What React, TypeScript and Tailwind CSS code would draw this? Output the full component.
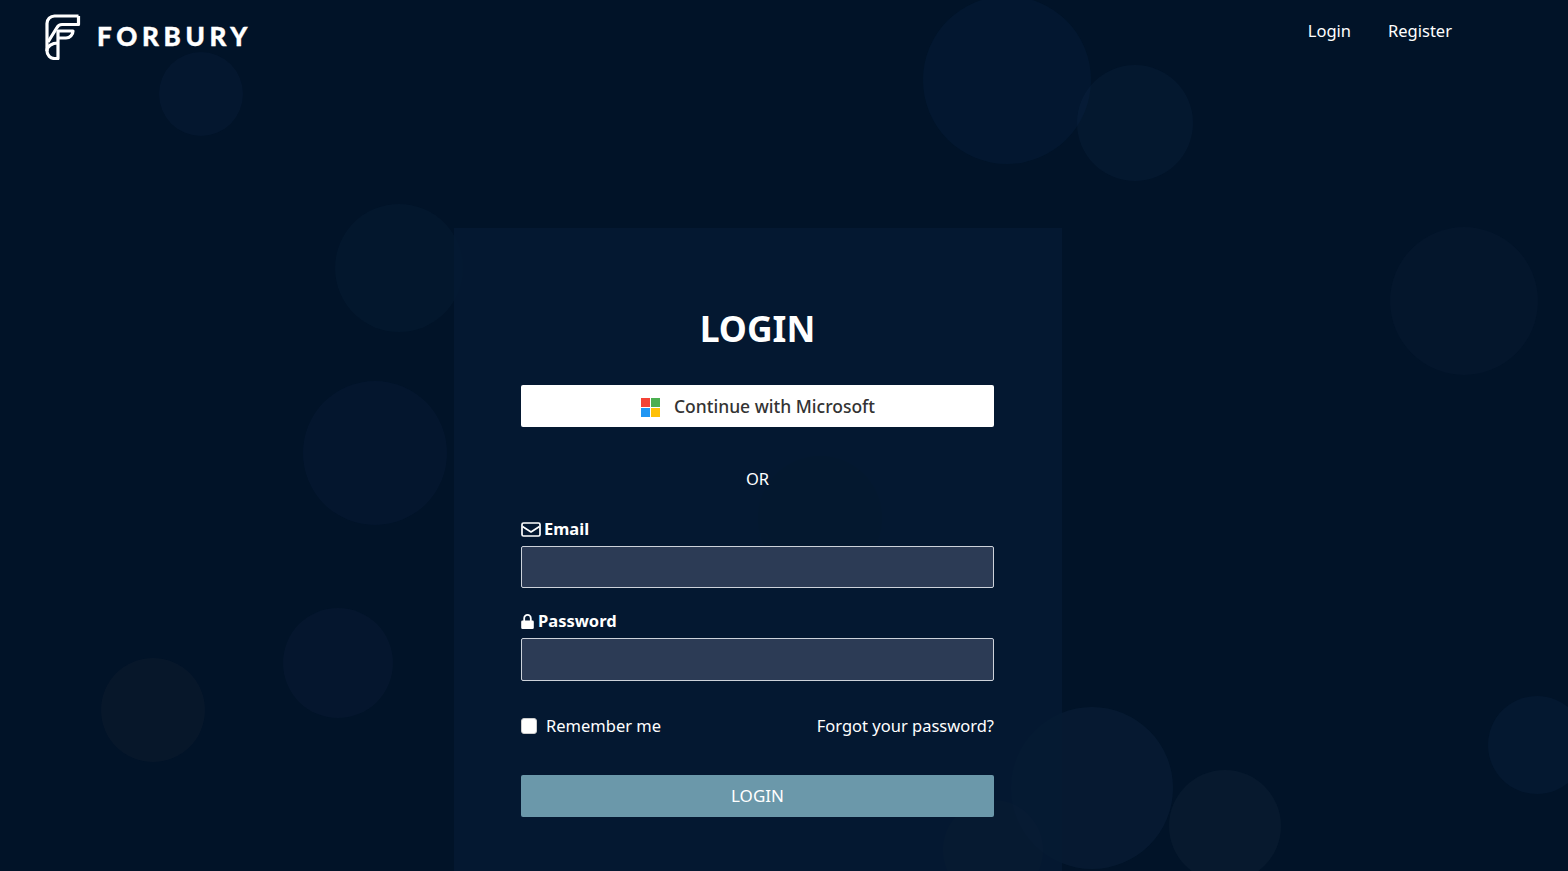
const bubbles = [
  { x: 201, y: 94, r: 42, c: "rgba(30,50,90,0.14)" },
  { x: 1007, y: 80, r: 84, c: "rgba(20,50,90,0.17)" },
  { x: 1135, y: 123, r: 58, c: "rgba(30,60,90,0.14)" },
  { x: 399, y: 268, r: 64, c: "rgba(20,50,80,0.14)" },
  { x: 1464, y: 301, r: 74, c: "rgba(40,60,90,0.09)" },
  { x: 375, y: 453, r: 72, c: "rgba(30,50,90,0.13)" },
  { x: 820, y: 518, r: 62, c: "rgba(0,0,0,0.2)" },
  { x: 338, y: 663, r: 55, c: "rgba(40,50,90,0.12)" },
  { x: 153, y: 710, r: 52, c: "rgba(70,60,70,0.1)" },
  { x: 1092, y: 788, r: 81, c: "rgba(40,60,100,0.16)" },
  { x: 1225, y: 826, r: 56, c: "rgba(60,70,90,0.12)" },
  { x: 993, y: 850, r: 50, c: "rgba(80,60,70,0.16)" },
  { x: 1537, y: 745, r: 49, c: "rgba(30,60,100,0.14)" },
];

const Logo = () => (
  <svg width="36" height="46" viewBox="0 0 36 46" fill="none" stroke="white" strokeWidth="3.2" strokeLinejoin="round">
    <path d="M33.500 2H9.500A7.500 7.500 0 0 0 2 9.500V37a7.500 7.500 0 0 0 7.500 7.500H13V17H28a7 7 0 0 1-7 7H13" />
    <path d="M33.500 2v8.500H17c-2.500 0-4 1-5 3L3 28" />
    <path d="M13 29C7 29 2 32 2 37" />
  </svg>
);

const MicrosoftIcon = () => (
  <svg className="mt-[3px] ml-[1px]" width="19" height="19" viewBox="0 0 19 19">
    <rect width="9" height="9" fill="#f44336" />
    <rect x="10" width="9" height="9" fill="#4caf50" />
    <rect y="10" width="9" height="9" fill="#2196f3" />
    <rect x="10" y="10" width="9" height="9" fill="#ffc107" />
  </svg>
);

const MailIcon = () => (
  <svg width="20" height="15" viewBox="0 0 20 15" fill="none" stroke="white" strokeWidth="1.7" strokeLinejoin="round">
    <rect x="1" y="1" width="18" height="13" rx="1.500" />
    <path d="M1.500 4.500 10 10l8.500-5.500" />
  </svg>
);

const LockIcon = () => (
  <svg width="13" height="15" viewBox="0 0 13 15">
    <path d="M1.500 6.500h10a1.300 1.300 0 0 1 1.300 1.300v5.900a1.300 1.300 0 0 1-1.300 1.300h-10a1.300 1.300 0 0 1-1.300-1.300V7.800a1.300 1.300 0 0 1 1.300-1.300z" fill="white" />
    <path d="M3.200 7V4.200a3.300 3.300 0 0 1 6.600 0V7" fill="none" stroke="white" strokeWidth="1.800" />
  </svg>
);

export default function App() {
  return (
    <div className="relative h-[871px] overflow-hidden bg-[#011328] font-['Noto_Sans','Open_Sans',sans-serif] text-white">
      {bubbles.map((b) => (
        <div
          key={`${b.x}-${b.y}`}
          className="absolute rounded-full"
          style={{ left: b.x - b.r, top: b.y - b.r, width: b.r * 2, height: b.r * 2, background: b.c }}
        />
      ))}

      <div className="relative flex flex-col">
        <nav className="flex h-[70px] items-start justify-between pl-[45px] pr-[116px]">
          <div className="flex items-center gap-[16px] pt-[14px]">
            <Logo />
            <span className="-mt-[3px] font-['Lato',sans-serif] text-[26px] leading-none font-black tracking-[0.18em] [-webkit-text-stroke:0.4px_white]">FORBURY</span>
          </div>
          <div className="flex gap-[37px] pt-[19px] text-[16.5px] leading-6">
            <a>Login</a>
            <a>Register</a>
          </div>
        </nav>

        <main className="mt-[158px] ml-[454px] h-[643px] w-[608px] bg-[#051a33]/80 pl-[67px] pr-[68px] pt-[75px]">
          <h1 className="text-center text-[35.5px] leading-[50px] font-bold">LOGIN</h1>

          <button className="mt-[32px] flex h-[42px] w-full items-center justify-center gap-[14px] rounded-[2px] bg-white text-[17.5px] font-medium text-[#333]">
            <MicrosoftIcon />
            Continue with Microsoft
          </button>

          <p className="mt-[40px] text-center text-[16.5px] leading-6">OR</p>

          <label className="mt-[26px] flex h-6 items-center gap-[3px] text-[16.5px] font-bold">
            <MailIcon />
            Email
          </label>
          <input className="mt-[5px] block h-[42px] w-full rounded-[2px] border border-[#cdd2da] bg-[#2c3b55]" />

          <label className="mt-[21px] flex h-6 items-center gap-[4px] text-[16.5px] font-bold">
            <LockIcon />
            Password
          </label>
          <input type="password" className="mt-[5px] block h-[43px] w-full rounded-[2px] border border-[#cdd2da] bg-[#2c3b55]" />

          <div className="mt-[33px] flex h-6 items-center justify-between text-[16.5px]">
            <label className="flex items-center gap-[9px]">
              <span className="block h-4 w-4 rounded-[3px] border border-[#ccc] bg-white" />
              Remember me
            </label>
            <a>Forgot your password?</a>
          </div>

          <button className="mt-[37px] h-[42px] w-full rounded-[2px] bg-[#6b98aa] text-[17px] text-white">LOGIN</button>
        </main>
      </div>
    </div>
  );
}
